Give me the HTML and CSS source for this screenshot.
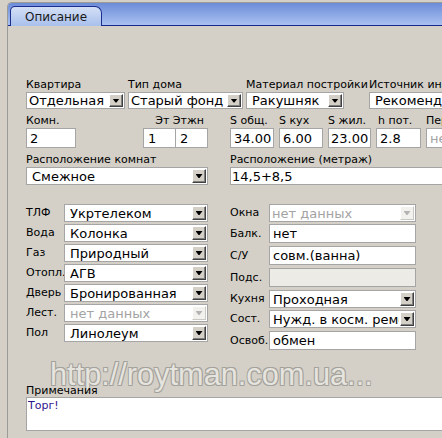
FILE: index.html
```html
<!DOCTYPE html>
<html lang="ru">
<head>
<meta charset="utf-8">
<title>Описание</title>
<link rel="stylesheet" href="styles.css">
</head>
<body>
<div class="frame">
  <div class="tabbar"><div class="tab">Описание</div></div>
  <div class="content">
    <div class="row r1">
      <div class="field c1">
        <div class="lbl">Квартира</div>
        <div class="sel w99"><span class="val p2">Отдельная</span><span class="btn"></span></div>
      </div>
      <div class="field c2">
        <div class="lbl">Тип дома</div>
        <div class="sel w115"><span class="val p2">Старый фонд</span><span class="btn"></span></div>
      </div>
      <div class="field c3">
        <div class="lbl">Материал постройки</div>
        <div class="sel w98"><span class="val p5">Ракушняк</span><span class="btn"></span></div>
      </div>
      <div class="field c4">
        <div class="lbl">Источник информации</div>
        <div class="sel w140"><span class="val p5">Рекомендации</span><span class="btn"></span></div>
      </div>
    </div>

    <div class="row r2">
      <div class="left split">
        <div class="field">
          <div class="lbl">Комн.</div>
          <div class="inp w50 h20 p3">2</div>
        </div>
        <div class="field">
          <div class="lbl right">Эт Этжн</div>
          <div class="pair">
            <div class="inp w33 h20 p4">1</div>
            <div class="inp w33 h20 p4 join">2</div>
          </div>
        </div>
      </div>
      <div class="rightpart sizes">
        <div class="field w44"><div class="lbl">S общ.</div><div class="inp w44 h20 p3">34.00</div></div>
        <div class="field w44"><div class="lbl">S кух</div><div class="inp w44 h20 p3">6.00</div></div>
        <div class="field w43"><div class="lbl">S жил.</div><div class="inp w43 h20 p2">23.00</div></div>
        <div class="field w45"><div class="lbl lpad">h пот.</div><div class="inp w45 h20 p3">2.8</div></div>
        <div class="field"><div class="lbl">Перекр.</div><div class="inp w80 h20 p3 dis">нет данных</div></div>
      </div>
    </div>

    <div class="row r3">
      <div class="left field">
        <div class="lbl">Расположение комнат</div>
        <div class="sel w182 h18"><span class="val p5">Смежное</span><span class="btn"></span></div>
      </div>
      <div class="rightpart field">
        <div class="lbl">Расположение (метраж)</div>
        <div class="inp wlong h18 p1">14,5+8,5</div>
      </div>
    </div>

    <div class="row sec">
      <div class="left colL">
        <div class="frow r20"><span class="flbl l38">ТЛФ</span><div class="sel w144 h18"><span class="val p5">Укртелеком</span><span class="btn"></span></div></div>
        <div class="frow r20"><span class="flbl l38">Вода</span><div class="sel w144 h18"><span class="val p5">Колонка</span><span class="btn"></span></div></div>
        <div class="frow r20"><span class="flbl l38">Газ</span><div class="sel w144 h18"><span class="val p5">Природный</span><span class="btn"></span></div></div>
        <div class="frow r20"><span class="flbl l38">Отопл.</span><div class="sel w144 h18"><span class="val p5">АГВ</span><span class="btn"></span></div></div>
        <div class="frow r20"><span class="flbl l38">Дверь</span><div class="sel w144 h18"><span class="val p5">Бронированная</span><span class="btn"></span></div></div>
        <div class="frow r20"><span class="flbl l38">Лест.</span><div class="sel w144 h18 dis"><span class="val p5">нет данных</span><span class="btn"></span></div></div>
        <div class="frow r20"><span class="flbl l38">Пол</span><div class="sel w144 h18"><span class="val p5">Линолеум</span><span class="btn"></span></div></div>
      </div>
      <div class="rightpart colR">
        <div class="frow r20"><span class="flbl l39">Окна</span><div class="sel w147 h18 dis"><span class="val p2">нет данных</span><span class="btn"></span></div></div>
        <div class="frow r22"><span class="flbl l39 t19">Балк.</span><div class="inp w147 h19 p3">нет</div></div>
        <div class="frow r22"><span class="flbl l39 t19">С/У</span><div class="inp w147 h19 p3">совм.(ванна)</div></div>
        <div class="frow r22"><span class="flbl l39 t19">Подс.</span><div class="inp w147 h19 p3 off"></div></div>
        <div class="frow r20"><span class="flbl l39">Кухня</span><div class="sel w147 h18"><span class="val p3">Проходная</span><span class="btn"></span></div></div>
        <div class="frow r21"><span class="flbl l39">Сост.</span><div class="sel w147 h18"><span class="val p3">Нужд. в косм. ремонте</span><span class="btn"></span></div></div>
        <div class="frow r22"><span class="flbl l39 t19">Освоб.</span><div class="inp w147 h19 p3">обмен</div></div>
      </div>
    </div>

    <div class="notes">
      <div class="lbl nl">Примечания</div>
      <div class="ta">Торг!</div>
    </div>
  </div>
</div>
<div class="wm">http://roytman.com.ua...</div>
</body>
</html>
```

FILE: styles.css
```css
* { box-sizing: border-box; }
html, body { margin: 0; overflow: hidden; }
body {
  width: 442px;
  height: 438px;
  background: #d4d0c8;
  font-family: "DejaVu Sans", Verdana, sans-serif;
  font-size: 11px;
  color: #000;
}
.frame {
  margin: 2px 0 0 7px;
  width: 560px;
  height: 436px;
  border-left: 1px solid #9d9b95;
  border-top: 1px solid #9d9b95;
  border-top-left-radius: 5px;
  overflow: hidden;
}
.tabbar {
  height: 23px;
  background: linear-gradient(#6d8cd8, #a9c1f1);
  border-bottom: 1px solid #15288a;
  display: flex;
  align-items: flex-end;
  padding-left: 2px;
}
.tab {
  width: 92px;
  height: 20px;
  margin-bottom: -1px;
  border: 1px solid #1b2d8e;
  border-bottom: 0;
  border-radius: 5px 7px 0 0;
  background: linear-gradient(#d3dff5, #a9c0ec);
  font-size: 12px;
  line-height: 18px;
  padding-top: 1px;
  text-align: center;
  color: #1a1a1a;
}
.content { padding: 52px 0 0 18px; }
.row { display: flex; }
.field { display: flex; flex-direction: column; }
.lbl { line-height: 14px; white-space: nowrap; }
.lbl.right { text-align: right; padding-right: 4px; }
.lbl.lpad { padding-left: 2px; }

.sel {
  display: flex;
  background: #fff;
  border: 1px solid #a5a5a5;
  height: 17px;
  font-size: 13px;
}
.val {
  flex: 1;
  min-width: 0;
  overflow: hidden;
  white-space: nowrap;
  display: flex;
  align-items: center;
  line-height: 15px;
}
.btn {
  flex: none;
  width: 14px;
  margin: 1px;
  background: #d4d0c8;
  border: 1px solid;
  border-color: #ffffff #404040 #404040 #ffffff;
  box-shadow: inset -1px -1px #808080;
  display: flex;
  align-items: center;
  justify-content: center;
}
.btn::after {
  content: "";
  width: 7px;
  height: 4px;
  background: #000;
  clip-path: polygon(0 0, 100% 0, 57% 100%, 43% 100%);
}
.sel.dis .val { color: #a3a3a3; }
.sel.dis .btn {
  background: #f2f1ed;
  border-color: #fff #c9c7c1 #c9c7c1 #fff;
  box-shadow: none;
}
.sel.dis .btn::after { background: #b4b4b4; }

.inp {
  border: 1px solid #a5a5a5;
  background: #fff;
  font-size: 13px;
  display: flex;
  align-items: center;
  white-space: nowrap;
  overflow: hidden;
}
.inp.dis { color: #a3a3a3; }
.inp.off { background: #ecebe6; }
.join { margin-left: -1px; }
.pair { display: flex; }

.p1 { padding-left: 1px; }
.p2 { padding-left: 2px; }
.p3 { padding-left: 3px; }
.p4 { padding-left: 4px; }
.p5 { padding-left: 5px; }

.h18 { height: 18px; }
.h19 { height: 19px; }
.h20 { height: 20px; }

.w33 { width: 33px; }
.w43 { width: 43px; }
.w44 { width: 44px; }
.w45 { width: 45px; }
.w50 { width: 50px; }
.w80 { width: 80px; }
.w98 { width: 98px; }
.w99 { width: 99px; }
.w115 { width: 115px; }
.w140 { width: 140px; }
.w144 { width: 144px; }
.w147 { width: 147px; }
.w182 { width: 182px; }
.wlong { width: 300px; }

.r1 { gap: 3px; }
.c1 { width: 99px; }
.c2 { width: 115px; }
.c3 { width: 120px; }
.c4 { width: 200px; }

.r2 { margin-top: 5px; }
.r3 { margin-top: 5px; }
.left { width: 182px; flex: none; }
.split { display: flex; justify-content: space-between; }
.rightpart { margin-left: 22px; }
.sizes { display: flex; gap: 5px; }

.sec { margin-top: 19px; align-items: flex-start; }
.frow { display: flex; align-items: flex-start; }
.r20 { height: 20px; }
.r21 { height: 21px; }
.r22 { height: 22px; }
.flbl { flex: none; line-height: 18px; white-space: nowrap; }
.flbl.t19 { line-height: 19px; }
.l38 { width: 38px; }
.l39 { width: 39px; }

.notes { margin-top: 31px; }
.nl {
  line-height: 13px;
  position: relative;
  z-index: 2;
  width: max-content;
}
.ta {
  width: 500px;
  height: 34px;
  border: 1px solid #a5a5a5;
  background: #fff;
  color: #2d168c;
  font-size: 11px;
  line-height: 14px;
  padding: 1px 0 0 1px;
}

.wm {
  position: absolute;
  z-index: 1;
  left: 50px;
  top: 358px;
  font-family: "Liberation Sans", Arial, sans-serif;
  font-size: 32px;
  line-height: 32px;
  white-space: nowrap;
  color: #e6e4de;
  text-shadow: -1px -1px 0 #a3a19b, 1px -1px 0 #a3a19b, -1px 1px 0 #a3a19b, 1px 1px 0 #a3a19b;
  transform: scaleX(0.96);
  transform-origin: 0 0;
  pointer-events: none;
}
```
